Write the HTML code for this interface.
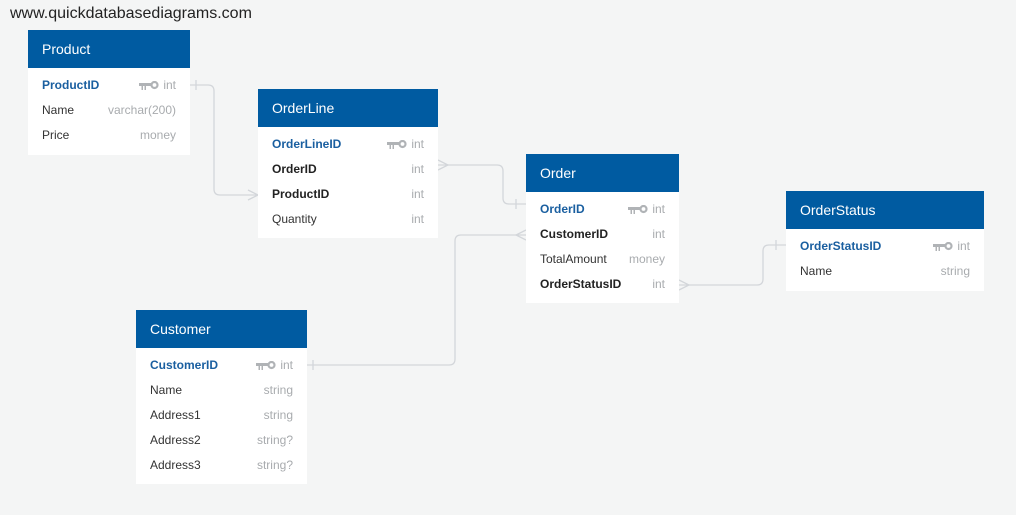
<!DOCTYPE html>
<html><head><meta charset="utf-8"><style>
body{margin:0;width:1016px;height:515px;background:#f4f5f5;font-family:"Liberation Sans",sans-serif;position:relative;overflow:hidden}
.t{position:absolute;background:#fff}
.h{background:#005ba1;color:#fff;font-size:14px;height:38px;line-height:38px;padding-left:14px;margin-bottom:5px}
.r{position:relative;height:25px;line-height:25px;font-size:12px;color:#333;padding:0 14px}
.r span{position:absolute;right:14px;color:#a8abae;font-weight:normal}
.k{color:#1a5fa0;font-weight:bold}
.b{font-weight:bold;color:#222}
.key{display:inline-block;width:20px;margin-right:4px;vertical-align:-1px}
.url{position:absolute;left:10px;top:5px;font-size:16px;color:#222}
</style></head><body>
<div class="url">www.quickdatabasediagrams.com</div>
<svg width="1016" height="515" style="position:absolute;left:0;top:0" fill="none" stroke="#d3d6da" stroke-width="1.3">
<path d="M190 85H208Q214 85 214 91V189Q214 195 220 195H258"/><path d="M196 80v10M248 190L258 195L248 200"/>
<path d="M438 165H497Q503 165 503 171V198Q503 204 509 204H526"/><path d="M438 160L448 165L438 170M516 199v10"/>
<path d="M307 365H449Q455 365 455 359V241Q455 235 461 235H526"/><path d="M313 360v10M526 230L516 235L526 240"/>
<path d="M679 285H757Q763 285 763 279V251Q763 245 769 245H786"/><path d="M679 280L689 285L679 290M776 240v10"/>
</svg>
<svg width="0" height="0" style="position:absolute"><defs><g id="k"><circle cx="15.5" cy="4" r="3" fill="none" stroke="#b0b3b6" stroke-width="2.2"/><path d="M0 2h13v3H7v4H5.5V5H4v4H2.5V5H0z" fill="#b0b3b6"/></g></defs></svg>

<div class="t" style="left:28px;top:30px;width:162px;height:125px">
<div class="h">Product</div>
<div class="r k">ProductID<span><svg class="key" width="20" height="9"><use href="#k"/></svg>int</span></div>
<div class="r">Name<span>varchar(200)</span></div>
<div class="r">Price<span>money</span></div>
</div>

<div class="t" style="left:258px;top:89px;width:180px;height:149px">
<div class="h">OrderLine</div>
<div class="r k">OrderLineID<span><svg class="key" width="20" height="9"><use href="#k"/></svg>int</span></div>
<div class="r b">OrderID<span>int</span></div>
<div class="r b">ProductID<span>int</span></div>
<div class="r">Quantity<span>int</span></div>
</div>

<div class="t" style="left:526px;top:154px;width:153px;height:149px">
<div class="h">Order</div>
<div class="r k">OrderID<span><svg class="key" width="20" height="9"><use href="#k"/></svg>int</span></div>
<div class="r b">CustomerID<span>int</span></div>
<div class="r">TotalAmount<span>money</span></div>
<div class="r b">OrderStatusID<span>int</span></div>
</div>

<div class="t" style="left:786px;top:191px;width:198px;height:100px">
<div class="h">OrderStatus</div>
<div class="r k">OrderStatusID<span><svg class="key" width="20" height="9"><use href="#k"/></svg>int</span></div>
<div class="r">Name<span>string</span></div>
</div>

<div class="t" style="left:136px;top:310px;width:171px;height:174px">
<div class="h">Customer</div>
<div class="r k">CustomerID<span><svg class="key" width="20" height="9"><use href="#k"/></svg>int</span></div>
<div class="r">Name<span>string</span></div>
<div class="r">Address1<span>string</span></div>
<div class="r">Address2<span>string?</span></div>
<div class="r">Address3<span>string?</span></div>
</div>
</body></html>
